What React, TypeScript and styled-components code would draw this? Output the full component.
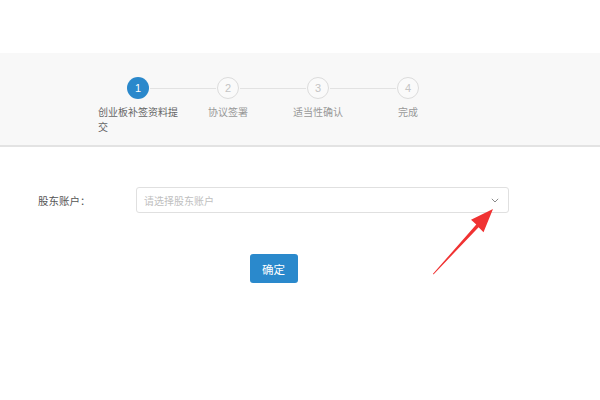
import React from "react";
import styled, { createGlobalStyle } from "styled-components";

const GlobalStyle = createGlobalStyle`
  html, body {
    margin: 0;
    padding: 0;
    background: #ffffff;
    font-family: "Noto Sans CJK SC", "Microsoft YaHei", sans-serif;
  }
`;

const Page = styled.div`
  position: relative;
  width: 600px;
  height: 400px;
  overflow: hidden;
  background: #ffffff;
`;

const StepsBar = styled.div`
  margin-top: 53px;
  height: 94px;
  box-sizing: border-box;
  background: #f8f8f8;
  border-bottom: 2px solid #e3e3e3;
  display: flex;
  padding-left: 93px;
  padding-top: 24px;
`;

const Step = styled.div<{ $last?: boolean }>`
  position: relative;
  width: 90px;
  display: flex;
  flex-direction: column;
  align-items: center;

  &::after {
    content: "";
    display: ${(p) => (p.$last ? "none" : "block")};
    position: absolute;
    top: 11px;
    left: calc(50% + 12px);
    width: 66px;
    height: 1px;
    background: #e2e2e2;
  }
`;

const Circle = styled.div<{ $active?: boolean }>`
  width: 22px;
  height: 22px;
  box-sizing: border-box;
  border-radius: 50%;
  display: flex;
  align-items: center;
  justify-content: center;
  font-family: "Liberation Sans", Arial, sans-serif;
  font-size: 11px;
  background: ${(p) => (p.$active ? "#2a88cb" : "#fafafa")};
  color: ${(p) => (p.$active ? "#ffffff" : "#c4c4c4")};
  border: ${(p) => (p.$active ? "none" : "1.5px solid #dcdcdc")};
`;

const StepLabel = styled.div<{ $active?: boolean }>`
  margin-top: 5px;
  max-width: 80px;
  text-align: left;
  font-size: 10px;
  line-height: 15px;
  color: ${(p) => (p.$active ? "#666666" : "#999999")};
`;

const Form = styled.div`
  margin: 40px 0 0 38px;
  width: 471px;
  display: flex;
  flex-direction: column;
`;

const FieldRow = styled.div`
  display: flex;
  align-items: center;
  height: 26px;
`;

const FieldLabel = styled.div`
  width: 98px;
  font-size: 10.5px;
  color: #555555;
`;

const Select = styled.div`
  flex: 1;
  height: 26px;
  box-sizing: border-box;
  border: 1px solid #e0e0e0;
  border-radius: 3px;
  display: flex;
  align-items: center;
  justify-content: space-between;
  padding: 0 9px 0 7px;
  background: #ffffff;
`;

const Placeholder = styled.span`
  font-size: 10px;
  color: #c0c0c0;
`;

const ButtonRow = styled.div`
  margin-top: 41px;
  display: flex;
  justify-content: center;
`;

const Button = styled.button`
  width: 48px;
  height: 29px;
  border: none;
  border-radius: 3px;
  background: #2a89cc;
  color: #ffffff;
  font-family: "Noto Sans CJK SC", "Microsoft YaHei", sans-serif;
  font-size: 11.5px;
  padding: 0;
`;

const ArrowOverlay = styled.svg`
  position: absolute;
  left: 0;
  top: 0;
  pointer-events: none;
`;

const steps = [
  { n: 1, label: "创业板补签资料提交" },
  { n: 2, label: "协议签署" },
  { n: 3, label: "适当性确认" },
  { n: 4, label: "完成" },
];

export default function App() {
  return (
    <Page>
      <GlobalStyle />
      <StepsBar>
        {steps.map((s, i) => (
          <Step key={s.n} $last={i === steps.length - 1}>
            <Circle $active={i === 0}>{s.n}</Circle>
            <StepLabel $active={i === 0}>{s.label}</StepLabel>
          </Step>
        ))}
      </StepsBar>
      <Form>
        <FieldRow>
          <FieldLabel>股东账户：</FieldLabel>
          <Select>
            <Placeholder>请选择股东账户</Placeholder>
            <svg width="8" height="5" viewBox="0 0 8 5">
              <path d="M0.8 0.8 L4 4 L7.2 0.8" fill="none" stroke="#8a8a8a" strokeWidth="1" />
            </svg>
          </Select>
        </FieldRow>
        <ButtonRow>
          <Button>确定</Button>
        </ButtonRow>
      </Form>
      <ArrowOverlay width="600" height="400" viewBox="0 0 600 400">
        <polygon
          points="433.5,274.5 478.6,227.2 483.5,232.2 493,209 471,219.8 476.3,224.5 433,273.8"
          fill="#f03232"
        />
      </ArrowOverlay>
    </Page>
  );
}
